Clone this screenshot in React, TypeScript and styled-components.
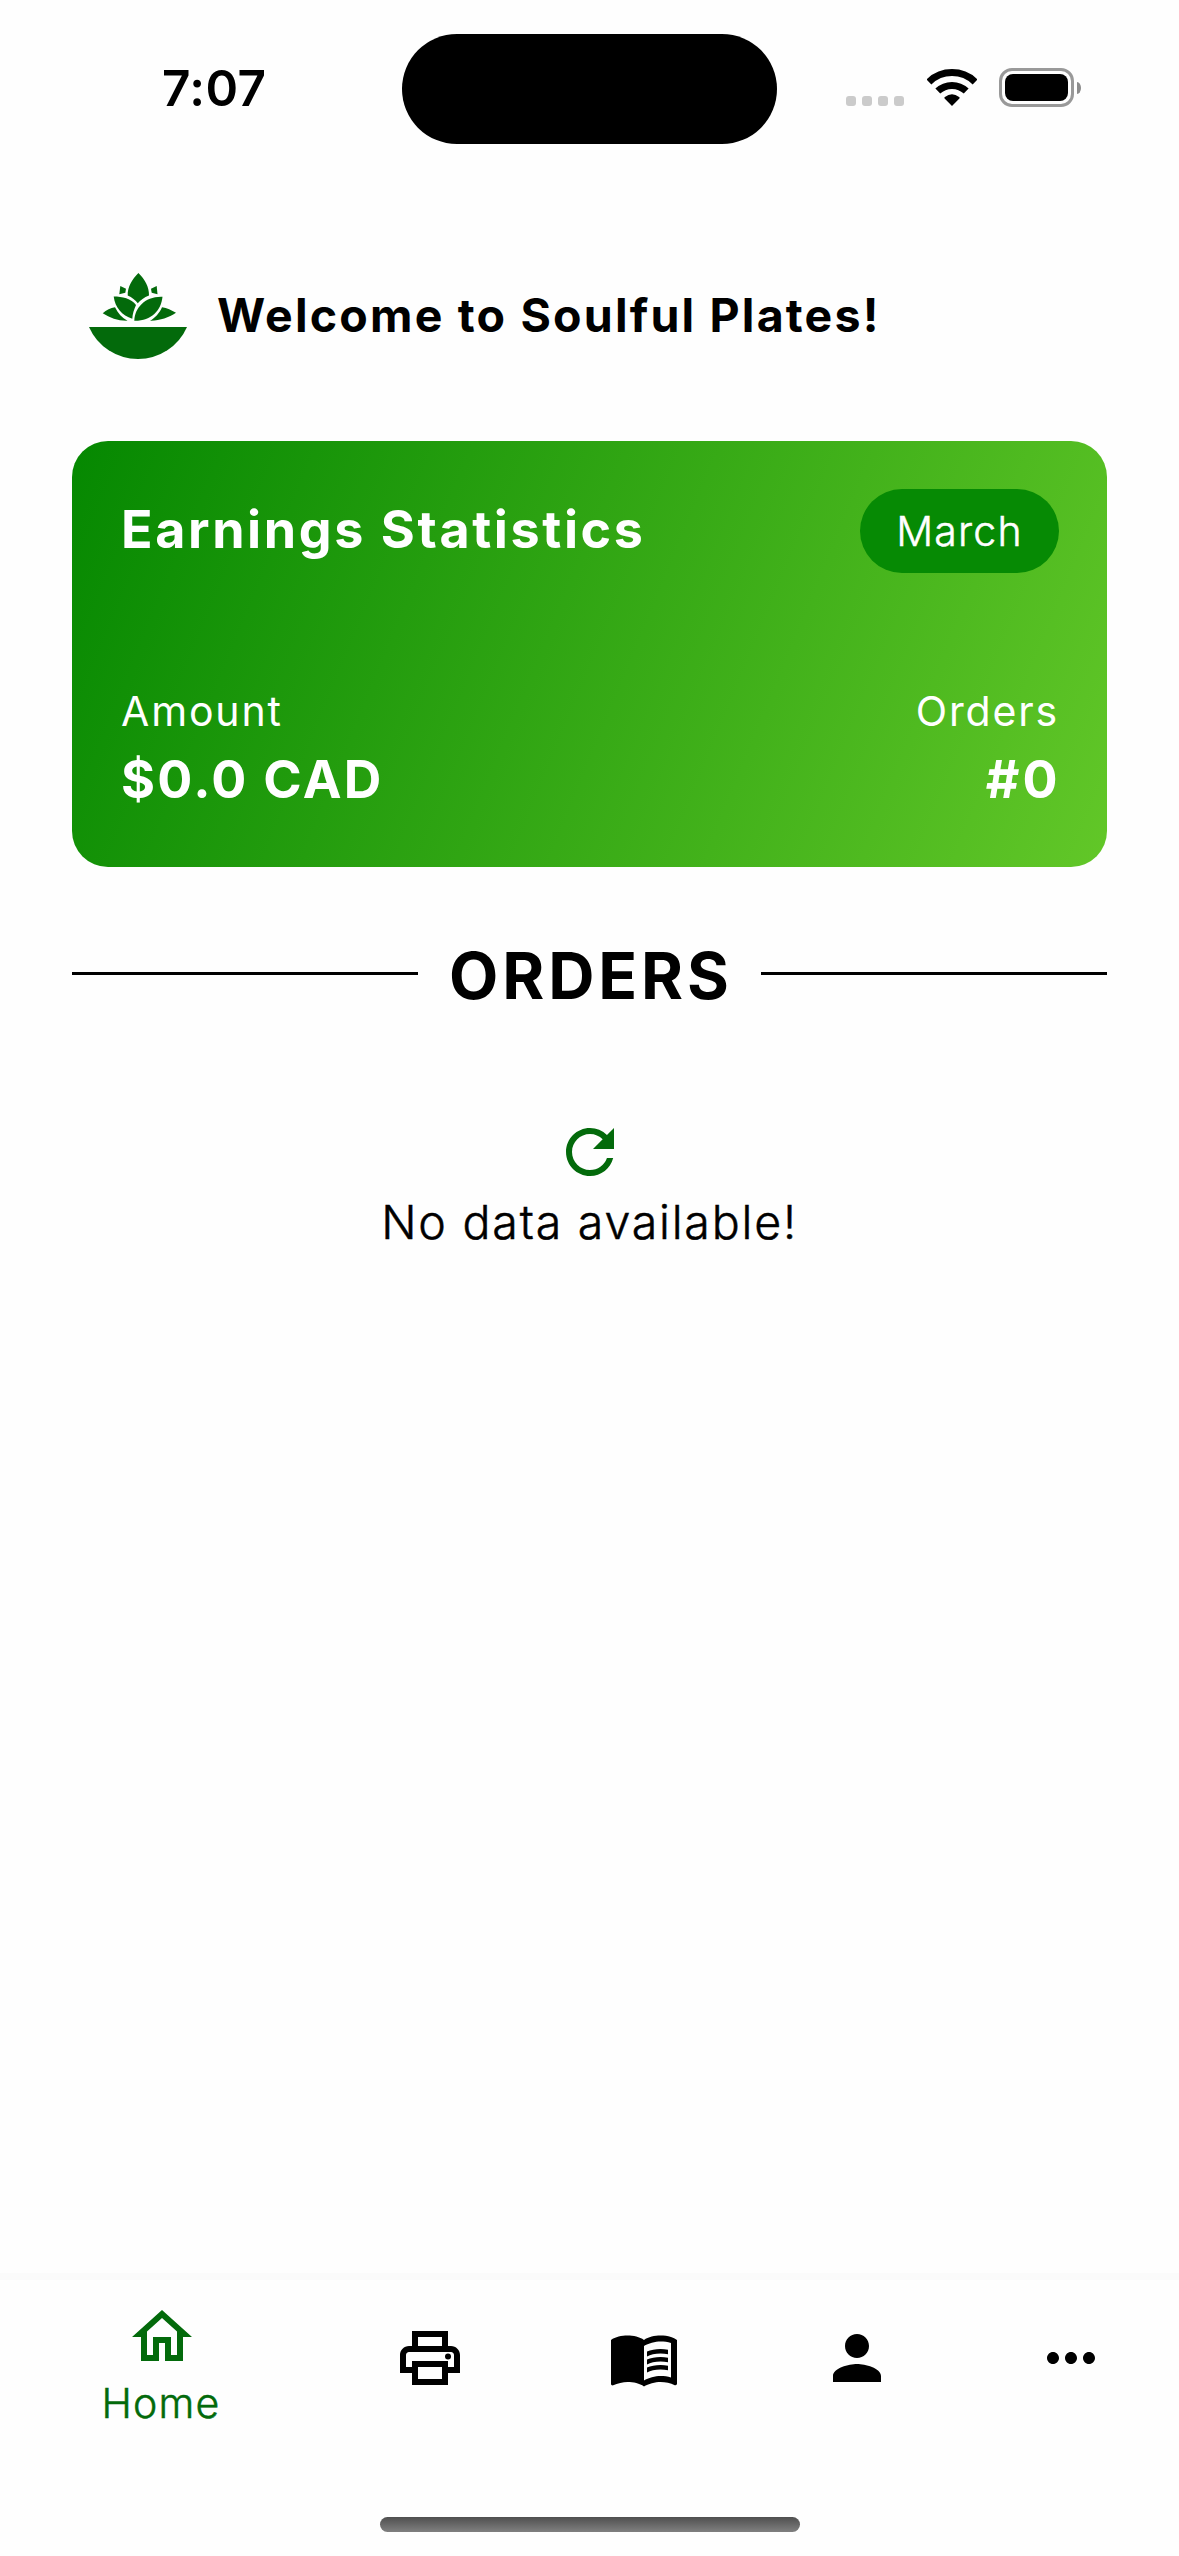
import React from "react";
import styled, { createGlobalStyle } from "styled-components";
import {
  MdMenuBook,
  MdMoreHoriz,
  MdOutlineHome,
  MdOutlinePrint,
  MdPerson,
  MdRefresh,
} from "react-icons/md";

const green = "#036a0b";
const paper = "#fefefe";

const GlobalStyle = createGlobalStyle`
  * { box-sizing: border-box; }
  body { margin: 0; background: ${paper}; }
`;

const Screen = styled.div`
  display: flex;
  flex-direction: column;
  width: 1179px;
  height: 2556px;
  overflow: hidden;
  background: ${paper};
  color: #000;
  font-family: Inter, "Liberation Sans", sans-serif;
`;

const StatusBar = styled.header`
  display: grid;
  grid-template-columns: 402px 375px 402px;
  height: 144px;
  padding-top: 34px;
`;

const Time = styled.div`
  padding-left: 162px;
  height: 108px;
  line-height: 108px;
  font-size: 49.5px;
  font-weight: 600;
  letter-spacing: 0.4px;
`;

const Island = styled.div`
  height: 110px;
  border-radius: 55px;
  background: #000;
`;

const StatusIcons = styled.div`
  display: flex;
  align-items: center;
  height: 107px;
  padding-left: 69px;
`;

const SignalDots = styled.div`
  display: flex;
  gap: 6px;
  margin: 27px 23px 0 0;
`;

const SignalDot = styled.span`
  width: 10px;
  height: 10px;
  border-radius: 3px;
  background: #cbcbcb;
`;

const Battery = styled.div`
  width: 75px;
  height: 39px;
  margin-left: 22px;
  padding: 3px;
  border: 3px solid #999;
  border-radius: 13px;
`;

const BatteryLevel = styled.div`
  height: 100%;
  border-radius: 8px;
  background: #000;
`;

const BatteryTip = styled.div`
  width: 4px;
  height: 12px;
  margin-left: 3px;
  border-radius: 0 4px 4px 0 / 0 6px 6px 0;
  background: #8c8c8c;
`;

const Content = styled.main`
  flex: 1;
  display: flex;
  flex-direction: column;
  padding: 122px 72px 0;
`;

const Welcome = styled.div`
  display: flex;
  align-items: center;
  gap: 23px;
  height: 100px;
  padding-left: 12px;
`;

const WelcomeText = styled.h1`
  margin: 0 0 2px;
  font-size: 46.5px;
  font-weight: 700;
  line-height: 60px;
  letter-spacing: 2.19px;
  white-space: nowrap;
`;

const Card = styled.section`
  display: flex;
  flex-direction: column;
  justify-content: space-between;
  height: 426px;
  margin-top: 75px;
  padding: 48px 48px 52px 49px;
  border-radius: 36px;
  background: linear-gradient(112.4deg, #058801 0%, #62c728 100%);
  color: #fff;
`;

const CardRow = styled.div`
  display: flex;
  align-items: center;
  justify-content: space-between;
`;

const CardTitle = styled.h2`
  margin: 0 0 2px;
  font-size: 52px;
  font-weight: 700;
  line-height: 64px;
  letter-spacing: 2.6px;
`;

const MonthPill = styled.button`
  width: 199px;
  height: 84px;
  padding: 0;
  border: 0;
  border-radius: 42px;
  background: #068a04;
  color: #fff;
  font: 300 41px/84px Inter, sans-serif;
  letter-spacing: 1.2px;
  -webkit-text-stroke: 0.5px currentColor;
`;

const Stat = styled.div<{ $end?: boolean }>`
  display: flex;
  flex-direction: column;
  align-items: ${(p) => (p.$end ? "flex-end" : "flex-start")};
  gap: 1px;
`;

const StatLabel = styled.span`
  font-size: 41px;
  line-height: 63px;
  letter-spacing: 1.85px;
`;

const StatValue = styled.span<{ $spacing: number }>`
  margin-right: -${(p) => p.$spacing - 1.5}px;
  font-size: 52px;
  font-weight: 700;
  line-height: 71px;
  letter-spacing: ${(p) => p.$spacing}px;
`;

const SectionHeading = styled.div`
  display: flex;
  align-items: center;
  height: 80px;
  margin-top: 69px;
`;

const Rule = styled.span`
  flex: 1;
  height: 3px;
  margin-bottom: 5px;
  background: #000;
`;

const SectionTitle = styled.h2`
  width: 343px;
  margin: 0;
  padding-left: 31px;
  font-size: 64px;
  font-weight: 700;
  line-height: 80px;
  letter-spacing: 3.9px;
`;

const EmptyState = styled.div`
  display: flex;
  flex-direction: column;
  align-items: center;
  gap: 4px;
  margin-top: 100px;
`;

const EmptyText = styled.p`
  margin: 0;
  font-size: 46.5px;
  font-weight: 300;
  line-height: 60px;
  letter-spacing: 1.8px;
  -webkit-text-stroke: 0.5px currentColor;
`;

const NavShadow = styled.div`
  height: 7px;
  background: #fbfbfb;
`;

const Nav = styled.nav`
  display: flex;
  align-items: flex-start;
  justify-content: space-between;
  height: 237px;
  padding: 0 72px;
`;

const NavItem = styled.a<{ $active?: boolean }>`
  display: flex;
  flex-direction: column;
  align-items: center;
  width: ${(p) => (p.$active ? 180 : 72)}px;
  padding-top: ${(p) => (p.$active ? 21 : 42)}px;
  color: ${(p) => (p.$active ? green : "#000")};
`;

const NavLabel = styled.span`
  margin-right: 2px;
  font-size: 41px;
  font-weight: 300;
  line-height: 61px;
  letter-spacing: 1.2px;
  -webkit-text-stroke: 0.5px currentColor;
`;

const HomeIndicator = styled.div`
  width: 420px;
  height: 15px;
  margin: 0 auto 24px;
  border-radius: 7.5px;
  background: linear-gradient(#4f4f4f, #808080);
`;

function WifiIcon() {
  return (
    <svg width="50" height="37" viewBox="0 0 50 37" fill="none">
      <path d="M1.9 12.9A33.2 33.2 0 0 1 48.1 12.9" stroke="#000" strokeWidth="7" />
      <path d="M10.8 22.1A20.5 20.5 0 0 1 39.2 22.1" stroke="#000" strokeWidth="7" />
      <path d="M25 37L17.6 29.6Q16.8 28.6 17.9 27.9Q25 22.6 32.1 27.9Q33.2 28.6 32.4 29.6Z" fill="#000" />
    </svg>
  );
}

function LotusBowl() {
  return (
    <svg width="110" height="100" viewBox="0 0 110 100" fill={green}>
      <path d="M5 61H103A53.5 53.5 0 0 1 5 61Z" />
      <path d="M54.4 7C48 13.5 43.5 21 43.7 29.5C48 31.5 51.5 34 53.8 37.3C56.5 34 60 31.5 65 29.5C65.2 21 61 13.5 54.4 7Z" />
      <path d="M36.3 20L42 22.7L41.3 26.7L35.3 28.2Z" />
      <path d="M72.7 20L67 22.7L67.7 26.7L73.5 28.2Z" />
      <path d="M29.7 30.5C38 30.5 47.5 32.5 52 39C50 43.5 48.5 48 48.3 52.8C38 49.5 31 41.5 29.7 30.5Z" />
      <path d="M78.5 30.7C77 45 67 55 50.3 54.7C50.5 42 61 30 78.5 30.7Z" />
      <path d="M18.7 47.3C22.5 44 26.5 42 31 41.3C34 47.5 38 52 43.5 54.7C34.5 55 26 52 18.7 47.3Z" />
      <path d="M92 46.8C87.5 44 83 42 78 41.2C75.5 47 71 52 66 54.7C75.5 55 84.5 51.5 92 46.8Z" />
    </svg>
  );
}

const tabs = [MdOutlinePrint, MdMenuBook, MdPerson, MdMoreHoriz];

export default function App() {
  return (
    <Screen>
      <GlobalStyle />
      <StatusBar>
        <Time>7:07</Time>
        <Island />
        <StatusIcons>
          <SignalDots>
            <SignalDot />
            <SignalDot />
            <SignalDot />
            <SignalDot />
          </SignalDots>
          <WifiIcon />
          <Battery>
            <BatteryLevel />
          </Battery>
          <BatteryTip />
        </StatusIcons>
      </StatusBar>

      <Content>
        <Welcome>
          <LotusBowl />
          <WelcomeText>Welcome to Soulful Plates!</WelcomeText>
        </Welcome>

        <Card>
          <CardRow>
            <CardTitle>Earnings Statistics</CardTitle>
            <MonthPill>March</MonthPill>
          </CardRow>
          <CardRow>
            <Stat>
              <StatLabel>Amount</StatLabel>
              <StatValue $spacing={2.3}>$0.0 CAD</StatValue>
            </Stat>
            <Stat $end>
              <StatLabel>Orders</StatLabel>
              <StatValue $spacing={3}>#0</StatValue>
            </Stat>
          </CardRow>
        </Card>

        <SectionHeading>
          <Rule />
          <SectionTitle>ORDERS</SectionTitle>
          <Rule />
        </SectionHeading>

        <EmptyState>
          <MdRefresh size={72} color={green} />
          <EmptyText>No data available!</EmptyText>
        </EmptyState>
      </Content>

      <NavShadow />
      <Nav>
        <NavItem $active>
          <MdOutlineHome size={72} />
          <NavLabel>Home</NavLabel>
        </NavItem>
        {tabs.map((Icon, i) => (
          <NavItem key={i}>
            <Icon size={72} />
          </NavItem>
        ))}
      </Nav>
      <HomeIndicator />
    </Screen>
  );
}
